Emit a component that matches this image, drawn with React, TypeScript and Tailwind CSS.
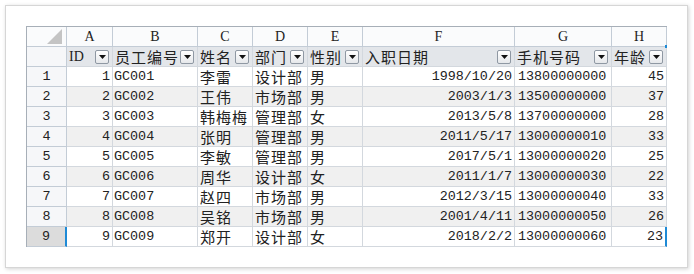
import React from "react"

const mono = "font-[family-name:'Liberation_Mono','Noto_Sans_CJK_SC',monospace] text-[13.4px]"
const serif = "font-[family-name:'Liberation_Serif',serif] text-[14px]"
const cjk = "font-[family-name:'Noto_Sans_CJK_SC',sans-serif] text-[15px] tracking-[1px]"

type Row = [number, string, string, string, string, string, string, number]

const rows: Row[] = [
    [1, "GC001", "李雷", "设计部", "男", "1998/10/20", "13800000000", 45],
    [2, "GC002", "王伟", "市场部", "男", "2003/1/3", "13500000000", 37],
    [3, "GC003", "韩梅梅", "管理部", "女", "2013/5/8", "13700000000", 28],
    [4, "GC004", "张明", "管理部", "男", "2011/5/17", "13000000010", 33],
    [5, "GC005", "李敏", "管理部", "男", "2017/5/1", "13000000020", 25],
    [6, "GC006", "周华", "设计部", "女", "2011/1/7", "13000000030", 22],
    [7, "GC007", "赵四", "市场部", "男", "2012/3/15", "13000000040", 33],
    [8, "GC008", "吴铭", "市场部", "男", "2001/4/11", "13000000050", 26],
    [9, "GC009", "郑开", "设计部", "女", "2018/2/2", "13000000060", 23],
]

const letters = ["A", "B", "C", "D", "E", "F", "G", "H"]
const fields: [string, boolean][] = [
    ["ID", false],
    ["员工编号", true],
    ["姓名", true],
    ["部门", true],
    ["性别", true],
    ["入职日期", true],
    ["手机号码", true],
    ["年龄", true],
]

function FilterButton() {
    return (
        <span className="ml-auto mr-[3px] flex h-[14px] w-[14px] shrink-0 items-center justify-center rounded-[2px] border border-[#8f98a3] bg-gradient-to-b from-white to-[#e6e8eb]">
            <svg width="7" height="4" viewBox="0 0 7 4">
                <path d="M0 0h7L3.5 4z" fill="#111" />
            </svg>
        </span>
    )
}

export default function App() {
    return (
        <div className="h-[274px] w-[694px] bg-white p-[5px]">
            <div className="h-[263px] w-[683px] border border-[#d6d6d6] bg-white pl-[20px] pt-[20px] shadow-[1px_1px_4px_rgba(0,0,0,0.18)]">
                <div className="grid w-[641px] grid-cols-[40px_46px_85px_55px_55px_55px_152px_97px_55px] border-l border-t border-[#a7afb8] text-[#222]">
                    {/* column letters */}
                    <div className="relative h-[20px] border-b border-r border-[#c3ccd6] bg-[#fafbfc]">
                        <svg className="absolute right-[4px] bottom-[2px]" width="15" height="15" viewBox="0 0 15 15">
                            <path d="M15 0v15H0z" fill="#c4c4c4" />
                        </svg>
                    </div>
                    {letters.map(l => (
                        <div key={l} className={`flex h-[20px] items-center justify-center border-b border-r border-[#c3ccd6] bg-[#fafbfc] leading-none ${serif}`}>
                            {l}
                        </div>
                    ))}

                    {/* filter header row */}
                    <div className="h-[20px] border-b border-r border-[#c3ccd6] bg-[#f6f7f9]" />
                    {fields.map(([name, isCjk], i) => (
                        <div
                            key={name}
                            className={`relative flex h-[20px] items-center border-b border-r border-[#d3d8de] bg-[#e3e6ea] pl-[2px] leading-none ${isCjk ? cjk : serif}`}
                        >
                            <span className="whitespace-nowrap">{name}</span>
                            <FilterButton />
                            {i === 7 && <span className="absolute -right-[1px] -top-[2px] h-[3px] w-[2px] bg-[#1e8ad6]" />}
                        </div>
                    ))}

                    {/* data rows */}
                    {rows.map((r, idx) => {
                        const even = idx % 2 === 1
                        const last = idx === rows.length - 1
                        const bg = even ? "bg-[#f0f0f0]" : "bg-white"
                        const cell = `flex h-[20px] items-center border-b border-r border-[#d3d8de] leading-none whitespace-nowrap overflow-hidden ${bg}`
                        return (
                            <React.Fragment key={r[0]}>
                                <div
                                    className={`flex h-[20px] items-center justify-center border-b border-[#c3ccd6] leading-none ${mono} ${
                                        last ? "border-r-2 border-r-[#1e8ad6] bg-[#dcdcdc]" : "border-r bg-[#f6f7f9]"
                                    }`}
                                >
                                    {r[0]}
                                </div>
                                <div className={`${cell} ${mono} justify-end pr-[2px]`}>{r[0]}</div>
                                <div className={`${cell} ${mono} pl-[1px]`}>{r[1]}</div>
                                <div className={`${cell} ${cjk} pl-[2px]`}>{r[2]}</div>
                                <div className={`${cell} ${cjk} pl-[2px]`}>{r[3]}</div>
                                <div className={`${cell} ${cjk} pl-[2px]`}>{r[4]}</div>
                                <div className={`${cell} ${mono} justify-end pr-[2px]`}>{r[5]}</div>
                                <div className={`${cell} ${mono} pl-[3px]`}>{r[6]}</div>
                                <div className={`${cell} ${mono} justify-end pr-[2px] ${last ? "border-r-2 border-r-[#1e8ad6]" : ""}`}>{r[7]}</div>
                            </React.Fragment>
                        )
                    })}
                </div>
            </div>
        </div>
    )
}
